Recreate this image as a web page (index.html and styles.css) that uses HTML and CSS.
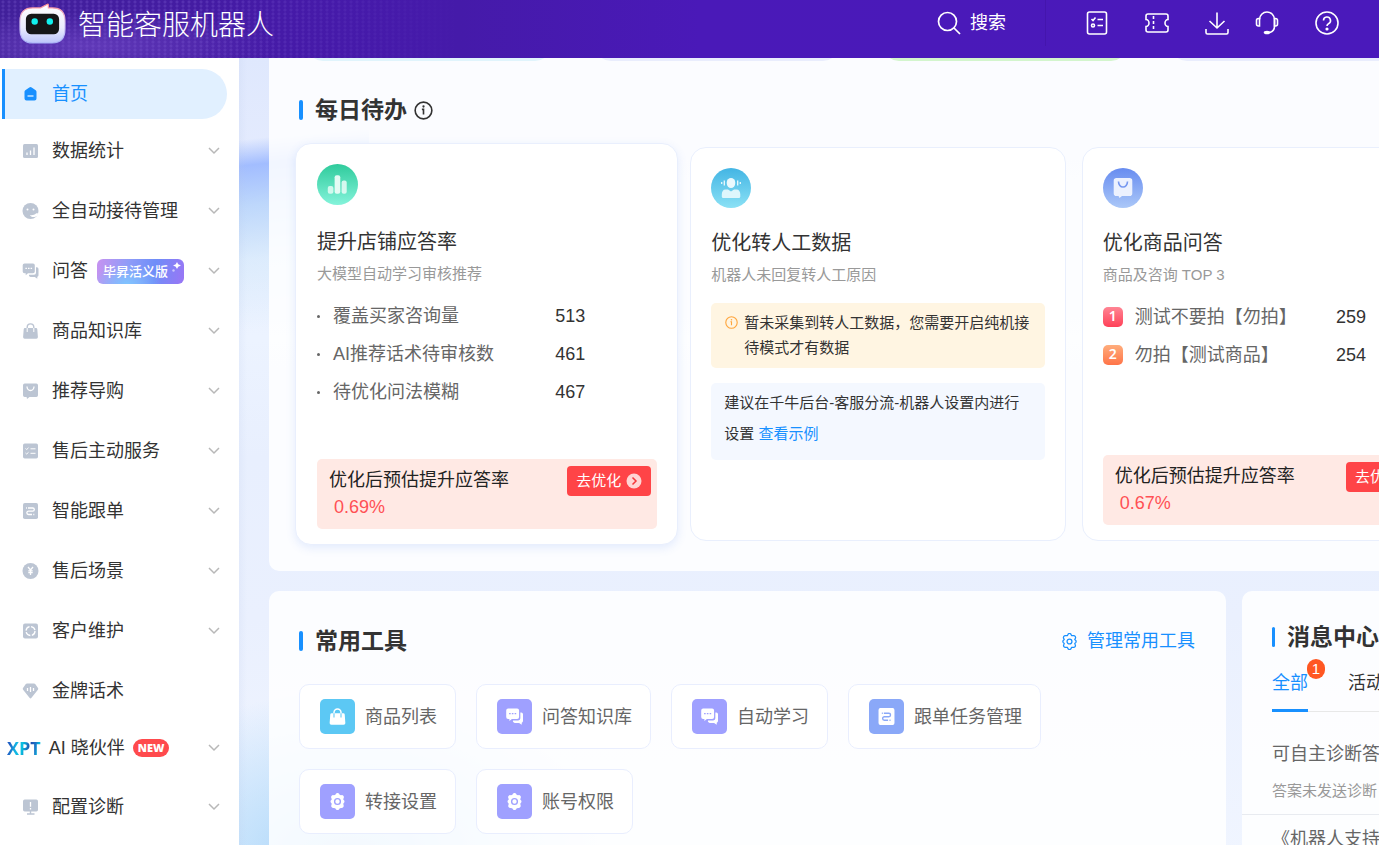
FILE: index.html
```html
<!DOCTYPE html>
<html lang="zh-CN">
<head>
<meta charset="utf-8">
<title>智能客服机器人</title>
<link rel="stylesheet" href="styles.css">
</head>
<body>
<svg class="sprite" aria-hidden="true">
  <symbol id="chevron" viewBox="0 0 12 8"><path d="M1 1l5 5 5-5" fill="none" stroke="currentColor" stroke-width="1.5"/></symbol>
  <symbol id="home" viewBox="0 0 16 16"><path d="M6.800 1.400a2 2 0 0 1 2.400 0l4 2.800a2 2 0 0 1 .8 1.600v6.700a2 2 0 0 1-2 2H4a2 2 0 0 1-2-2V5.800a2 2 0 0 1 .8-1.600z" fill="currentColor"/><path d="M5 10h6" stroke="#e1f0ff" stroke-width="1.300"/></symbol>
  <symbol id="stats" viewBox="0 0 16 16"><rect x="0.500" y="1" width="15" height="14" rx="1.500" fill="currentColor"/><path class="cut" d="M4.500 12V9.500M8 12V7.500M11.500 12V4.500"/></symbol>
  <symbol id="face" viewBox="0 0 16 16"><circle cx="8" cy="8" r="8" fill="currentColor"/><circle class="cutfill" cx="5" cy="6.500" r="1"/><circle class="cutfill" cx="11" cy="6.500" r="1"/><path class="cutfill" d="M7.500 12c2 .5 4.500 0 6-1.500 1.500-.5 2.500.3 2 1-.7 1.500-2 2.500-3.500 2.500-2 .3-4.500-.5-4.500-2z"/></symbol>
  <symbol id="chat" viewBox="0 0 16 16"><path d="M2 .5h8.500A1.800 1.800 0 0 1 12.300 2.300v6.200a1.800 1.800 0 0 1-1.800 1.800H5.500l-2.300 2v-2H2A1.800 1.800 0 0 1 .2 8.500V2.300A1.800 1.800 0 0 1 2 .5z" fill="currentColor"/><path d="M13.500 4.200h.8A1.700 1.700 0 0 1 16 5.900v6.300a1.700 1.700 0 0 1-1.200 1.600V15.800L12.300 14H8.200a1.700 1.700 0 0 1-1.600-2.300h4.900a2 2 0 0 0 2-2z" fill="currentColor"/><path class="cut" d="M2.900 5.300h1.500M5.500 5.300H7M8.100 5.300h1.500"/></symbol>
  <symbol id="bag" viewBox="0 0 16 16"><path d="M4.700 8V4.200a3.300 3.300 0 0 1 6.600 0V8" fill="none" stroke="currentColor" stroke-width="1.400"/><path d="M2.500 5h11a1.300 1.300 0 0 1 1.300 1.200l.6 7.900a1.600 1.600 0 0 1-1.600 1.700H2.200A1.600 1.600 0 0 1 .6 14.100l.6-7.900A1.300 1.300 0 0 1 2.500 5z" fill="currentColor"/><path class="cut thin" d="M4.700 5v4M11.300 5v4"/></symbol>
  <symbol id="shop" viewBox="0 0 16 16"><path d="M2.200.5h11.600A1.700 1.700 0 0 1 15.500 2.200v10a1.700 1.700 0 0 1-1.700 1.700H7L4.500 16l-.4-2.100H2.200A1.700 1.700 0 0 1 .5 12.200v-10A1.700 1.700 0 0 1 2.200.5z" fill="currentColor"/><path class="cut" d="M4.500 3.500a3.500 4 0 0 0 7 0"/></symbol>
  <symbol id="tasks" viewBox="0 0 16 16"><rect x=".5" y=".5" width="15" height="15" rx="1.700" fill="currentColor"/><path class="cut thin" d="M3 5.500l1.200 1L6 4.800M8 5.800h5M3 10l1.200 1L6 9.300M8 10.300h5"/></symbol>
  <symbol id="follow" viewBox="0 0 16 16"><rect x=".5" y="0" width="15" height="16" rx="1.800" fill="currentColor"/><path class="cut" d="M5.500 5h4.700a1.600 1.600 0 0 1 0 3.200H6a1.650 1.650 0 0 0 0 3.300h3.500M3.600 5h.9M10.800 11.500h1"/></symbol>
  <symbol id="yen" viewBox="0 0 16 16"><circle cx="8" cy="8" r="8" fill="currentColor"/><path class="cut" d="M5.500 4L8 7l2.500-3M8 7v5M5.800 7.800h4.400M5.800 9.700h4.400"/></symbol>
  <symbol id="care" viewBox="0 0 16 16"><rect x=".5" y=".5" width="15" height="15" rx="2" fill="currentColor"/><circle class="cut" cx="8" cy="8" r="4.500" stroke-dasharray="5.500 1.570"/></symbol>
  <symbol id="gem" viewBox="0 0 16 16"><path d="M4.500.5h7a1.500 1.500 0 0 1 1.200.6l2.800 3.900a1.500 1.500 0 0 1-.1 1.700L9 14.800a1.300 1.300 0 0 1-2 0L.6 6.700A1.500 1.500 0 0 1 .5 5l2.800-3.900A1.500 1.500 0 0 1 4.500.5z" fill="currentColor"/><path class="cut" d="M5 5v3M8 4v5M11 5v3"/></symbol>
  <symbol id="monitor" viewBox="0 0 16 16"><rect x=".5" y=".5" width="15" height="12" rx="1.700" fill="currentColor"/><path d="M8 12v3M4.500 15h7.500" stroke="currentColor" stroke-width="1.400"/><path class="cut" d="M8 3v4.800M8 9v1.500"/></symbol>
  <symbol id="gear" viewBox="0 0 16 16"><path d="M6.500.8a1.800 1.800 0 0 1 3 0l.7 1 1.600.2a2 2 0 0 1 1.900 3L13.400 6l.9 1.100a1.800 1.800 0 0 1 0 1.800l-.9 1.300.3 1.200a2 2 0 0 1-1.900 2.700l-1.600.2-.7 1a1.800 1.800 0 0 1-3 0l-.7-1-1.600-.2a2 2 0 0 1-1.900-2.900L2.600 10l-.9-1.100a1.800 1.800 0 0 1 0-1.800L2.600 6 2.300 5a2 2 0 0 1 1.900-3l1.600-.2z" fill="currentColor"/><circle class="cut" cx="8" cy="8" r="2.700"/></symbol>
  <symbol id="gear-line" viewBox="0 0 16 16"><path d="M6.500 1.500a1.600 1.600 0 0 1 3 0l.6.9 1.600 0a1.800 1.800 0 0 1 1.700 2.800L13 6.200l1 1a1.600 1.600 0 0 1 0 1.600l-1 1 .4 1.200a1.800 1.800 0 0 1-1.700 2.600l-1.600 0-.6.900a1.600 1.600 0 0 1-3 0l-.6-.9-1.600 0a1.800 1.800 0 0 1-1.700-2.600L3 9.800l-1-1a1.600 1.600 0 0 1 0-1.600l1-1-.4-1a1.800 1.800 0 0 1 1.700-2.800l1.600 0z" fill="none" stroke="currentColor" stroke-width="1.200"/><circle cx="8" cy="8" r="2.300" fill="none" stroke="currentColor" stroke-width="1.200"/></symbol>
  <symbol id="info" viewBox="0 0 20 20"><circle cx="10" cy="10" r="8.800" fill="none" stroke="currentColor" stroke-width="1.700"/><path d="M8.300 8.800H10v5.500" fill="none" stroke="currentColor" stroke-width="1.700"/><circle cx="10" cy="5.800" r="1.200" fill="currentColor"/></symbol>
  <symbol id="go" viewBox="0 0 16 16"><circle cx="8" cy="8" r="7.500" fill="#ffd6d4"/><path d="M6.500 4.500L10 8l-3.500 3.500" fill="none" stroke="#f5383b" stroke-width="1.500"/></symbol>
</svg>

<header class="topbar">
  <div class="brand">
    <svg class="robot" viewBox="0 0 48 42" aria-hidden="true">
      <defs>
        <linearGradient id="rb" x1="0" y1="0" x2="0" y2="1"><stop offset="0" stop-color="#fff"/><stop offset=".6" stop-color="#ececfd"/><stop offset="1" stop-color="#bcc5fa"/></linearGradient>
        <linearGradient id="rs" x1="0" y1="0" x2="0" y2="1"><stop offset="0" stop-color="#ff8f94"/><stop offset=".5" stop-color="#dccdf5"/><stop offset="1" stop-color="#a8b2f8"/></linearGradient>
      </defs>
      <path d="M14 5H22L29 1.200Q30 .8 30 2V5H34Q47 5 47 18V27Q47 41 34 41H14Q1 41 1 27V18Q1 5 14 5z" fill="url(#rb)" stroke="url(#rs)" stroke-width="1.200"/>
      <rect x="7" y="11" width="34" height="21" rx="5.500" fill="#161618"/>
      <circle cx="16" cy="19" r="3.300" fill="#11f0ef"/><circle cx="31.500" cy="19" r="3.300" fill="#11f0ef"/>
    </svg>
    <span class="brand-name">智能客服机器人</span>
  </div>
  <button class="search" type="button">
    <svg width="24" height="24" viewBox="0 0 24 24" fill="none" stroke="currentColor" stroke-width="1.700"><circle cx="10.500" cy="10.500" r="9"/><path d="M17 17l6 6"/></svg>
    搜索
  </button>
  <nav class="topicons" aria-label="快捷入口">
    <button type="button" aria-label="任务"><svg viewBox="0 0 24 24"><rect x="2.500" y="1" width="19" height="22" rx="2"/><path d="M6.500 8l1.500 1.500 2.500-3M12.500 8.500H18M12.500 14.500H18"/><circle cx="8" cy="14.500" r="1.500"/></svg></button>
    <button type="button" aria-label="卡券"><svg viewBox="0 0 24 24"><path d="M1 5a2 2 0 0 1 2-2h18a2 2 0 0 1 2 2v3.500c-1.500 0-3 1.500-3 3.500s1.500 3.500 3 3.500V19a2 2 0 0 1-2 2H3a2 2 0 0 1-2-2v-3.500c1.500 0 3-1.500 3-3.500S2.500 8.500 1 8.500z"/><path d="M8.500 5v15" stroke-dasharray="3 2"/></svg></button>
    <button type="button" aria-label="下载"><svg viewBox="0 0 24 24"><path d="M12 1.500V17M4.500 10l7.500 7 7.500-7M1 18v3.500a1.500 1.500 0 0 0 1.500 1.500h19a1.500 1.500 0 0 0 1.500-1.500V18"/></svg></button>
    <button class="tight" type="button" aria-label="客服"><svg viewBox="0 0 24 24"><path d="M4.500 8.500a7.500 7.500 0 0 1 15 0V15a6.500 6.500 0 0 1-5 6.500"/><path d="M4.500 7.500H3.500a2 2 0 0 0-2 2V13a2 2 0 0 0 2 2h1zM19.500 7.500h1a2 2 0 0 1 2 2V13a2 2 0 0 1-2 2h-1zM10.500 21.500h3" /><ellipse cx="12" cy="21.500" rx="2.500" ry="1" fill="currentColor"/></svg></button>
    <button type="button" aria-label="帮助"><svg viewBox="0 0 24 24"><circle cx="12" cy="12" r="11"/><path d="M8.500 9.500a3.500 3.500 0 1 1 5 3.200c-1 .5-1.500 1-1.500 2.300"/><circle cx="12" cy="18" r=".8" fill="currentColor"/></svg></button>
  </nav>
</header>

<div class="layout">
  <aside class="sidebar">
    <a class="nav-item active" href="#"><svg class="nav-icon"><use href="#home"/></svg>首页</a>
    <a class="nav-item" href="#"><svg class="nav-icon"><use href="#stats"/></svg>数据统计<svg class="chev"><use href="#chevron"/></svg></a>
    <a class="nav-item" href="#"><svg class="nav-icon"><use href="#face"/></svg>全自动接待管理<svg class="chev"><use href="#chevron"/></svg></a>
    <a class="nav-item" href="#"><svg class="nav-icon"><use href="#chat"/></svg>问答<span class="edition">毕昇活义版<svg viewBox="0 0 10 12" aria-hidden="true"><path d="M6 0l1.200 2.300L10 3.500 7.200 4.700 6 7 4.800 4.700 2 3.500l2.800-1.200z" fill="#fff"/><circle cx="2.500" cy="8.500" r="1.200" fill="#fff" opacity=".55"/></svg></span><svg class="chev"><use href="#chevron"/></svg></a>
    <a class="nav-item" href="#"><svg class="nav-icon"><use href="#bag"/></svg>商品知识库<svg class="chev"><use href="#chevron"/></svg></a>
    <a class="nav-item" href="#"><svg class="nav-icon"><use href="#shop"/></svg>推荐导购<svg class="chev"><use href="#chevron"/></svg></a>
    <a class="nav-item" href="#"><svg class="nav-icon"><use href="#tasks"/></svg>售后主动服务<svg class="chev"><use href="#chevron"/></svg></a>
    <a class="nav-item" href="#"><svg class="nav-icon"><use href="#follow"/></svg>智能跟单<svg class="chev"><use href="#chevron"/></svg></a>
    <a class="nav-item" href="#"><svg class="nav-icon"><use href="#yen"/></svg>售后场景<svg class="chev"><use href="#chevron"/></svg></a>
    <a class="nav-item" href="#"><svg class="nav-icon"><use href="#care"/></svg>客户维护<svg class="chev"><use href="#chevron"/></svg></a>
    <a class="nav-item" href="#"><svg class="nav-icon"><use href="#gem"/></svg>金牌话术</a>
    <a class="nav-item partner" href="#"><span class="xpt">XPT</span>AI 晓伙伴<span class="new">NEW</span><svg class="chev"><use href="#chevron"/></svg></a>
    <a class="nav-item" href="#"><svg class="nav-icon"><use href="#monitor"/></svg>配置诊断<svg class="chev"><use href="#chevron"/></svg></a>
  </aside>

  <main class="main">
    <div class="content">
      <section class="panel todo">
        <div class="overview">
          <div class="tile cyan"></div><div class="tile"></div><div class="tile green"></div><div class="tile"></div>
        </div>
        <h2 class="title">每日待办<svg class="title-info"><use href="#info"/></svg></h2>
        <div class="cards">
          <article class="card raised">
            <svg class="badge" viewBox="0 0 40 40" aria-hidden="true"><defs><linearGradient id="g1" x1="0" y1="0" x2="0" y2="1"><stop offset="0" stop-color="#2fcb9c"/><stop offset="1" stop-color="#84f3da"/></linearGradient></defs><circle cx="20" cy="20" r="20" fill="url(#g1)"/><g fill="#e4fbf4"><rect x="10.500" y="21.500" width="5.500" height="7.500" rx="2" opacity=".85"/><rect x="17.200" y="11" width="5.500" height="18" rx="2"/><rect x="24" y="16" width="5" height="13" rx="2" opacity=".9"/></g></svg>
            <h3>提升店铺应答率</h3>
            <p class="sub">大模型自动学习审核推荐</p>
            <ul class="rows">
              <li><i class="dot"></i><span>覆盖买家咨询量</span><b>513</b></li>
              <li><i class="dot"></i><span>AI推荐话术待审核数</span><b>461</b></li>
              <li><i class="dot"></i><span>待优化问法模糊</span><b>467</b></li>
            </ul>
            <div class="estimate">
              <p>优化后预估提升应答率<em>0.69%</em></p>
              <button type="button">去优化<svg><use href="#go"/></svg></button>
            </div>
          </article>
          <article class="card">
            <svg class="badge" viewBox="0 0 40 40" aria-hidden="true"><defs><linearGradient id="g2" x1="0" y1="0" x2="0" y2="1"><stop offset="0" stop-color="#43b5e4"/><stop offset="1" stop-color="#8be1f5"/></linearGradient></defs><circle cx="20" cy="20" r="20" fill="url(#g2)"/><g fill="#eaf9fd"><rect x="15.800" y="10" width="8.400" height="10" rx="4.200"/><path d="M14.500 21.500h2.500l3 2 3-2h2.500c2.500 0 3.800 2 3.800 5V28.500c0 .9-.6 1.500-1.500 1.500H12.300c-.9 0-1.500-.6-1.500-1.500V26.500c0-3 1.200-5 3.700-5z" opacity=".9"/></g><path d="M13.300 12.500v5M10.700 14v2M26.700 12.500v5M29.300 14v2" stroke="#eaf9fd" stroke-width="1.300"/></svg>
            <h3>优化转人工数据</h3>
            <p class="sub">机器人未回复转人工原因</p>
            <div class="warn"><svg><use href="#info"/></svg><p>暂未采集到转人工数据，您需要开启纯机接待模式才有数据</p></div>
            <p class="tip">建议在千牛后台-客服分流-机器人设置内进行设置 <a href="#">查看示例</a></p>
          </article>
          <article class="card">
            <svg class="badge" viewBox="0 0 40 40" aria-hidden="true"><defs><linearGradient id="g3" x1="0" y1="0" x2="0" y2="1"><stop offset="0" stop-color="#678cf0"/><stop offset="1" stop-color="#abc8f8"/></linearGradient></defs><circle cx="20" cy="20" r="20" fill="url(#g3)"/><path d="M13.500 10h13a2.800 2.800 0 0 1 2.800 2.800v12.400a2.800 2.800 0 0 1-2.800 2.800H19l-2.500 2-1-2h-2a2.800 2.800 0 0 1-2.800-2.800V12.800a2.800 2.800 0 0 1 2.800-2.800z" fill="#ecf1fe"/><path d="M15.500 13.500a4.500 5.500 0 0 0 9 0" fill="none" stroke="#7798f0" stroke-width="1.600"/></svg>
            <h3>优化商品问答</h3>
            <p class="sub">商品及咨询 TOP 3</p>
            <ol class="rows ranked">
              <li><i class="rank first">1</i><span>测试不要拍【勿拍】</span><b>259</b></li>
              <li><i class="rank">2</i><span>勿拍【测试商品】</span><b>254</b></li>
            </ol>
            <div class="estimate">
              <p>优化后预估提升应答率<em>0.67%</em></p>
              <button type="button">去优化<svg><use href="#go"/></svg></button>
            </div>
          </article>
        </div>
      </section>

      <section class="panel tools">
        <div class="tools-head">
          <h2 class="title">常用工具</h2>
          <a class="manage" href="#"><svg><use href="#gear-line"/></svg>管理常用工具</a>
        </div>
        <div class="tool-list">
          <a class="tool sky" href="#"><span class="tool-icon"><svg><use href="#bag"/></svg></span>商品列表</a>
          <a class="tool" href="#"><span class="tool-icon"><svg><use href="#chat"/></svg></span>问答知识库</a>
          <a class="tool" href="#"><span class="tool-icon"><svg><use href="#chat"/></svg></span>自动学习</a>
          <a class="tool blue" href="#"><span class="tool-icon"><svg><use href="#follow"/></svg></span>跟单任务管理</a>
          <a class="tool" href="#"><span class="tool-icon"><svg><use href="#gear"/></svg></span>转接设置</a>
          <a class="tool" href="#"><span class="tool-icon"><svg><use href="#gear"/></svg></span>账号权限</a>
        </div>
      </section>

      <section class="panel news">
        <h2 class="title">消息中心</h2>
        <div class="tabs">
          <button class="tab current" type="button">全部<span class="count">1</span></button>
          <button class="tab" type="button">活动</button>
        </div>
        <article class="message"><h4>可自主诊断答案</h4><p>答案未发送诊断</p></article>
        <article class="message"><h4>《机器人支持设置</h4></article>
      </section>
    </div>
  </main>
</div>
</body>
</html>
```

FILE: styles.css
```css
* { box-sizing: border-box; }

body {
  margin: 0;
  height: 100vh;
  overflow: hidden;
  display: flex;
  flex-direction: column;
  font: 400 18px/28px "Liberation Sans", "Noto Sans CJK SC", sans-serif;
  color: #333;
}

h2, h3, h4, p, ul, ol { margin: 0; padding: 0; font-weight: inherit; }
ul, ol { list-style: none; }
i, em { font-style: normal; }
a { color: inherit; text-decoration: none; }
svg { display: block; flex: none; }
button { border: 0; padding: 0; background: none; color: inherit; font: inherit; cursor: pointer; }

.sprite { position: absolute; width: 0; height: 0; }
.cut { fill: none; stroke: var(--cut, #fff); stroke-width: 1.300; }
.cut.thin { stroke-width: 1; }
.cutfill { fill: var(--cut, #fff); }

/* Top bar */
.topbar {
  flex: none;
  height: 58px;
  padding: 0 40px 12px 19px;
  display: flex;
  align-items: center;
  color: #fff;
  background:
    linear-gradient(90deg, transparent 200px, #451aa9 460px, #4a19b8 700px, #4a19bb 100%),
    radial-gradient(ellipse 190px 34px at 90px 46px, rgba(126, 84, 210, .5), transparent),
    radial-gradient(circle, rgba(150, 120, 230, .22) 1px, transparent 2px) 0 0 / 6px 4px,
    linear-gradient(90deg, #41209a 0, #451aa6 280px, #4a19b8 600px);
}
.brand { display: flex; align-items: center; gap: 12px; margin-right: auto; }
.robot { width: 47px; height: 41px; }
.brand-name { padding-top: 6px; font-size: 28px; font-weight: 300; line-height: 40px; }
.search { display: flex; align-items: center; gap: 9px; padding-right: 39px; border-right: 1px solid #4415ad; height: 46px; }
.topicons { display: flex; gap: 36px; padding-left: 39px; }
.topicons svg { width: 24px; height: 24px; fill: none; stroke: currentColor; stroke-width: 1.600; }
.topicons .tight { margin-left: -10px; }

.layout { flex: 1; min-height: 0; display: flex; }

/* Sidebar */
.sidebar { flex: none; width: 239px; padding-top: 11px; background: #fff; overflow: hidden; }
.nav-item { display: flex; align-items: center; height: 60px; padding: 0 19px 0 22px; }
.nav-icon { width: 17px; height: 16px; margin-right: 13px; color: #bcc5d3; }
.chev { width: 12px; height: 8px; margin-left: auto; color: #b8b8b8; }
.nav-item.active {
  height: 50px;
  margin: 0 12px 2px 2px;
  padding-left: 17px;
  border-left: 3px solid #1890ff;
  border-radius: 0 25px 25px 0;
  background: #e1f0ff;
  color: #1890ff;
}
.active .nav-icon { color: #1890ff; }
.partner { height: 54px; margin-bottom: 2px; padding-left: 7px; }
.xpt {
  margin-right: 8px;
  font: 700 18px/20px "Open Sans", sans-serif;
  background: linear-gradient(100deg, #1f5fc4 10%, #12b7e4 28%, #08bfe0 45%, #1d4fb0 65%, #1d6fc4 78%, #08bfe0 90%);
  background-clip: text;
  color: transparent;
}
.new {
  margin-left: 8px;
  padding: 0 5px;
  border-radius: 9px;
  background: #ff4a4d;
  color: #fff;
  font: 800 11px/18px "Open Sans", sans-serif;
}
.edition {
  position: relative;
  width: 87px;
  height: 25px;
  margin-left: 9px;
  padding-left: 6px;
  border-radius: 6px;
  color: #fff;
  font-size: 13px;
  font-weight: 500;
  line-height: 25px;
  background:
    radial-gradient(ellipse 34px 20px at 30px 25px, #7fc4ff, transparent),
    linear-gradient(100deg, #c792f0 0, #8f9cf8 35%, #6f8df8 65%, #9a76f5 100%);
}
.edition svg { position: absolute; right: 3px; top: 3px; width: 10px; height: 12px; }

/* Main area */
.main {
  flex: 1;
  min-width: 0;
  padding-left: 30px;
  overflow: hidden;
  background:
    linear-gradient(90deg, rgba(180, 195, 230, .14), transparent 8px),
    radial-gradient(ellipse 260px 170px at 110px 102%, #a4d0f8 0, rgba(178, 218, 250, .7) 40%, transparent 100%),
    linear-gradient(174deg, transparent 10px, rgba(155, 184, 255, .9) 36px, rgba(176, 208, 250, .75) 76px, rgba(208, 232, 250, .5) 130px, transparent 200px) 0 72px / 130px 230px no-repeat,
    linear-gradient(#dfe8fd 0, #e4ebfe 100px, #ecf3ff 280px, #e8effe 400px, #eaf0fe 560px, #f0f5ff 800px);
}
.content {
  min-width: 1218px;
  display: grid;
  grid-template-columns: minmax(0, 957fr) minmax(0, 245fr);
  gap: 20px 16px;
}
.panel { border-radius: 10px; background: rgba(255, 255, 255, .86); overflow: hidden; }
.title {
  display: flex;
  align-items: center;
  gap: 7px;
  font-size: 23px;
  font-weight: 700;
  line-height: 32px;
  white-space: nowrap;
}
.title::before { content: ""; flex: none; width: 4px; height: 20px; margin-right: 5px; border-radius: 2px; background: #1890ff; }
.title-info { width: 19px; height: 19px; }

.todo { grid-column: 1 / -1; padding: 0 30px 30px; border-radius: 0 0 10px 10px; }
.overview { display: flex; gap: 44px; margin: -21px 42px 33px 8px; }
.tile { flex: 1; height: 24px; border-radius: 0 0 16px 16px; background: #e9edfd; }
.tile.cyan { background: #e0f4fc; }
.tile.green { background: #d3f5cd; }

.cards { display: grid; grid-template-columns: repeat(3, minmax(0, 1fr)); gap: 16px; margin-top: 21px; }
.card {
  display: flex;
  flex-direction: column;
  height: 394px;
  padding: 20px 20px 15px;
  border: 1px solid #e9effd;
  border-radius: 16px;
  background: #fff;
}
.card.raised { height: 402px; margin: -4px; padding-left: 21px; box-shadow: 0 3px 10px rgba(80, 130, 240, .14); }
.badge { width: 40px; height: 40px; }
.raised .badge { width: 41px; height: 41px; }
.card h3 { margin-top: 21px; font-size: 20px; line-height: 28px; }
.raised h3 { margin-top: 23px; }
.sub { margin-top: 8px; font-size: 15px; line-height: 20px; color: #999; }
.rows { margin-top: 13px; color: #666; }
.rows li { display: flex; align-items: center; height: 38px; }
.rows span { flex: 1; white-space: nowrap; }
.rows b { width: 102px; font-weight: 400; color: #333; }
.ranked b { width: 100px; }
.dot { width: 3px; height: 3px; margin-right: 13px; border-radius: 50%; background: #666; }
.rank {
  width: 20px;
  height: 20px;
  margin-right: 12px;
  border-radius: 5px;
  background: linear-gradient(#ffad7c, #ff7448);
  color: #fff;
  font: 600 14px/18px "Noto Sans", sans-serif;
  text-align: center;
}
.rank.first { background: linear-gradient(#ff8594, #ff4158); }

.estimate {
  display: flex;
  justify-content: space-between;
  align-items: flex-start;
  height: 70px;
  margin-top: auto;
  padding: 7px 6px 0 12px;
  border-radius: 5px;
  background: #ffe9e4;
  color: #222;
}
.estimate em { display: block; padding-left: 5px; color: #ff5054; line-height: 26px; }
.estimate button {
  display: flex;
  align-items: center;
  gap: 5px;
  height: 30px;
  padding: 0 9px;
  border-radius: 4px;
  background: #ff4447;
  color: #fff;
  font-size: 15px;
  white-space: nowrap;
}
.estimate button svg { width: 16px; height: 16px; }

.warn, .tip { border-radius: 5px; font-size: 15px; }
.warn { display: flex; gap: 6px; margin-top: 18px; padding: 7px 12px 8px 14px; background: #fff5e2; line-height: 25px; }
.warn svg { width: 13px; height: 13px; margin-top: 6px; color: #ffa53c; }
.tip { margin-top: 15px; padding: 4px 13px 11px; background: #f4f8ff; line-height: 31px; }
.tip a { color: #1890ff; }

/* Tools */
.tools { min-height: 254px; padding: 34px 31px 30px 30px; }
.tools-head { display: flex; justify-content: space-between; align-items: center; }
.manage { display: flex; align-items: center; gap: 9px; color: #1890ff; }
.manage svg { width: 17px; height: 17px; }
.tool-list { display: flex; flex-wrap: wrap; gap: 20px; margin-top: 27px; }
.tool {
  display: flex;
  align-items: center;
  gap: 10px;
  height: 65px;
  padding: 0 18px 0 20px;
  border: 1px solid #e9eefe;
  border-radius: 10px;
  background: #fff;
  color: #666;
  --cut: #9fa0ff;
}
.tool-icon { display: grid; place-items: center; width: 35px; height: 35px; border-radius: 5px; background: var(--cut); color: #fff; }
.tool-icon svg { width: 17px; height: 17px; }
.tool.sky { --cut: #5cc8f4; }
.tool.blue { --cut: #8aa8f8; }

/* Messages */
.news { padding-top: 30px; white-space: nowrap; }
.news .title { padding-left: 30px; }
.news .title::before { width: 3px; }
.tabs { display: flex; gap: 40px; margin: 10px 0 0 30px; height: 49px; border-bottom: 1px solid #e8e8e8; }
.tab { position: relative; height: 49px; padding-bottom: 10px; }
.tab.current { padding-bottom: 7px; color: #1890ff; border-bottom: 3px solid #1890ff; }
.count {
  position: absolute;
  left: 35px;
  top: -4px;
  width: 18px;
  height: 20px;
  border-radius: 10px;
  background: #ff5722;
  color: #fff;
  font-size: 15px;
  line-height: 20px;
}
.message { padding: 28px 0 12px 30px; border-bottom: 1px solid #e8ebf0; color: #666; }
.message + .message { padding-top: 10px; }
.message p { margin-top: 12px; font-size: 15px; line-height: 22px; color: #999; }
```
